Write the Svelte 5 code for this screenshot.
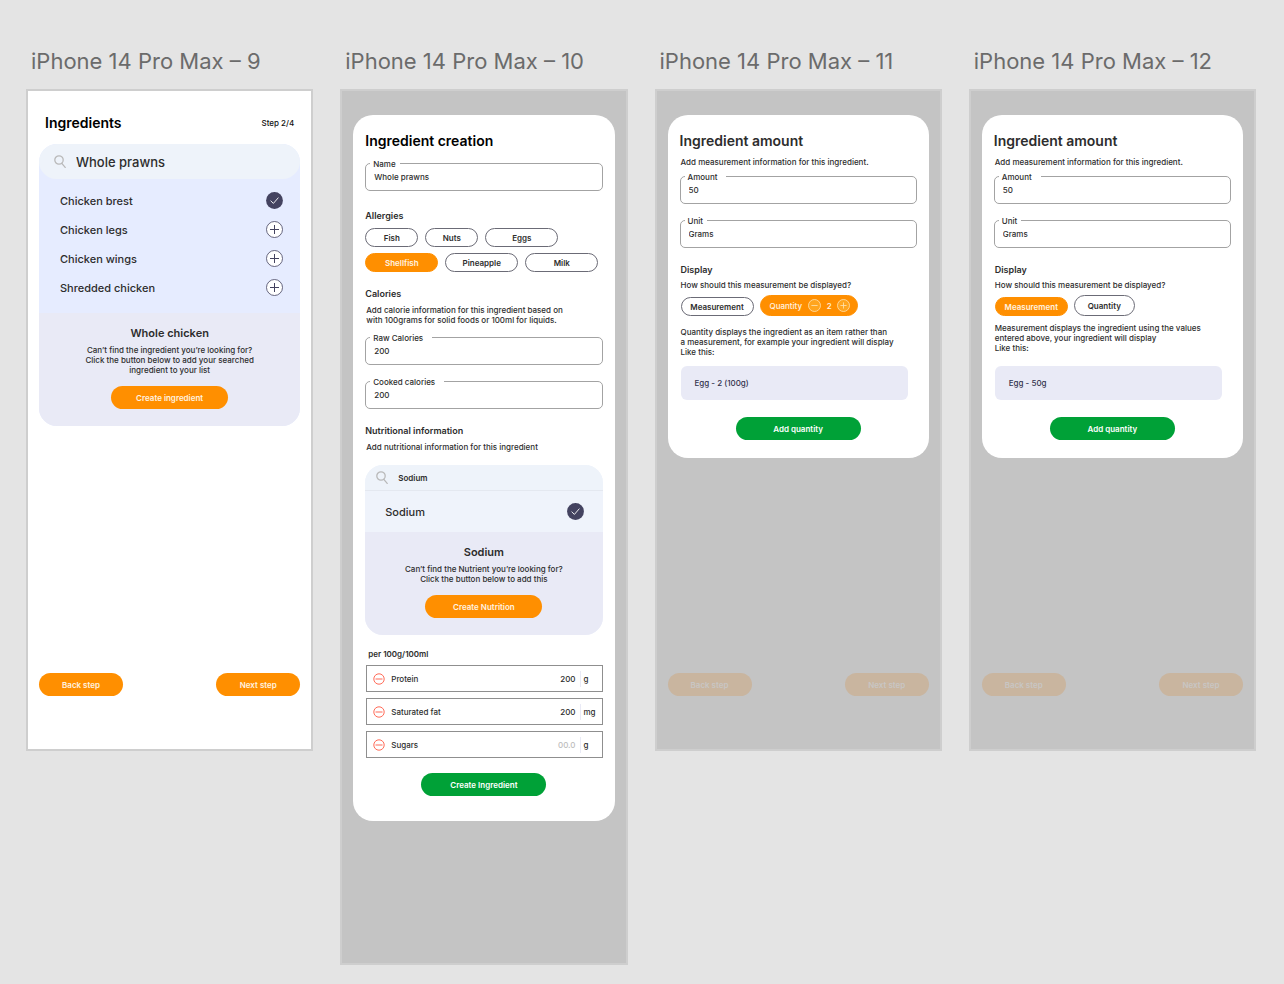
<script lang="ts">
  type Amount = {
    title: string;
    mode: "quantity" | "measurement";
    text: string;
    example: string;
  };

  const ingredients = [
    { name: "Chicken brest", added: true },
    { name: "Chicken legs", added: false },
    { name: "Chicken wings", added: false },
    { name: "Shredded chicken", added: false },
  ];

  const allergies = [
    [
      { name: "Fish", size: "sm" },
      { name: "Nuts", size: "sm" },
      { name: "Eggs", size: "md" },
    ],
    [
      { name: "Shellfish", size: "md", active: true },
      { name: "Pineapple", size: "md" },
      { name: "Milk", size: "md" },
    ],
  ];

  const nutrients = [
    { name: "Protein", value: "200", unit: "g" },
    { name: "Saturated fat", value: "200", unit: "mg" },
    { name: "Sugars", value: "", unit: "g" },
  ];

  const amounts: Amount[] = [
    {
      title: "iPhone 14 Pro Max – 11",
      mode: "quantity",
      text: "Quantity displays the ingredient as an item rather than\na measurement, for example your ingredient will display\nLike this:",
      example: "Egg - 2 (100g)",
    },
    {
      title: "iPhone 14 Pro Max – 12",
      mode: "measurement",
      text: "Measurement displays the ingredient using the values\nentered above, your ingredient will display\nLike this:",
      example: "Egg - 50g",
    },
  ];
</script>

{#snippet searchIcon()}
  <svg class="search-icon" width="12" height="13" viewBox="0 0 12 13" fill="none" stroke="#b9b9b9" stroke-width="1.3" aria-hidden="true">
    <circle cx="5" cy="5" r="4.2" />
    <path d="M7.6 8.2 11.2 12.4" stroke-linecap="round" />
  </svg>
{/snippet}

{#snippet toggle(name: string, added: boolean)}
  <button type="button" class="toggle" aria-label={added ? `Remove ${name}` : `Add ${name}`}>
    <svg width="17" height="17" viewBox="0 0 17 17" fill="none">
      {#if added}
        <circle cx="8.5" cy="8.5" r="8.4" fill="#444360" />
        <path d="M4.6 8.7 7.4 11.4 12.4 5.6" stroke="#fff" stroke-width="0.9" />
      {:else}
        <circle cx="8.5" cy="8.5" r="8" fill="#fff" stroke="#444360" stroke-width="0.8" />
        <path d="M8.5 4v9M4 8.5h9" stroke="#444360" stroke-width="1" />
      {/if}
    </svg>
  </button>
{/snippet}

{#snippet field(id: string, label: string, value: string, tight = false)}
  <div class="field">
    <label class:tight for={id}>{label}</label>
    <input {id} type="text" {value} />
  </div>
{/snippet}

{#snippet steps(dimmed: boolean)}
  <nav class="steps" class:dimmed aria-label="Steps">
    <button class="btn">Back step</button>
    <button class="btn">Next step</button>
  </nav>
{/snippet}

<main class="canvas">
  <section>
    <h2 class="board-title">iPhone 14 Pro Max – 9</h2>
    <div class="board">
      <header class="board-head">
        <h1>Ingredients</h1>
        <span>Step 2/4</span>
      </header>

      <div class="finder">
        <div class="search">
          {@render searchIcon()}
          <input type="text" aria-label="Search ingredients" value="Whole prawns" />
        </div>
        <ul class="results">
          {#each ingredients as item}
            <li>
              <span>{item.name}</span>
              {@render toggle(item.name, item.added)}
            </li>
          {/each}
        </ul>
        <div class="missing">
          <h3>Whole chicken</h3>
          <p>{"Can’t find the ingredient you’re looking for?\nClick the button below to add your searched\ningredient to your list"}</p>
          <button class="btn wide">Create ingredient</button>
        </div>
      </div>

      {@render steps(false)}
    </div>
  </section>

  <section>
    <h2 class="board-title">iPhone 14 Pro Max – 10</h2>
    <div class="board overlay tall">
      <form class="card creation">
        <h1>Ingredient creation</h1>
        {@render field("name", "Name", "Whole prawns", true)}

        <h4 class="first">Allergies</h4>
        <div class="pills">
          {#each allergies as row}
            <div class="pill-row">
              {#each row as item}
                <button type="button" class="pill {item.size}" class:active={item.active}>{item.name}</button>
              {/each}
            </div>
          {/each}
        </div>

        <h4>Calories</h4>
        <p class="note">{"Add calorie information for this ingredient based on\nwith 100grams for solid foods or 100ml for liquids."}</p>
        {@render field("raw", "Raw Calories", "200")}
        {@render field("cooked", "Cooked calories", "200")}

        <h4>Nutritional information</h4>
        <p class="note">Add nutritional information for this ingredient</p>

        <div class="finder compact">
          <div class="search">
            {@render searchIcon()}
            <input type="text" aria-label="Search nutrients" value="Sodium" />
          </div>
          <ul class="results">
            <li>
              <span>Sodium</span>
              {@render toggle("Sodium", true)}
            </li>
          </ul>
          <div class="missing">
            <h3>Sodium</h3>
            <p>{"Can’t find the Nutrient you’re looking for?\nClick the button below to add this"}</p>
            <button type="button" class="btn wide">Create Nutrition</button>
          </div>
        </div>

        <h5>per 100g/100ml</h5>
        <ul class="nutrients">
          {#each nutrients as item, i}
            <li>
              <button type="button" class="remove" aria-label="Remove {item.name}">
                <svg width="12" height="12" viewBox="0 0 12 12" fill="none" stroke="#ff5a45" stroke-width="0.9">
                  <circle cx="6" cy="6" r="5.2" />
                  <path d="M2.5 6h7" />
                </svg>
              </button>
              <label for="nutrient-{i}">{item.name}</label>
              <input id="nutrient-{i}" type="text" placeholder="00.0" value={item.value} />
              <span class="unit">{item.unit}</span>
            </li>
          {/each}
        </ul>

        <button type="button" class="btn submit">Create Ingredient</button>
      </form>
    </div>
  </section>

  {#each amounts as screen}
    <section>
      <h2 class="board-title">{screen.title}</h2>
      <div class="board overlay">
        <form class="card amount {screen.mode}">
          <h1>Ingredient amount</h1>
          <p class="note">Add measurement information for this ingredient.</p>
          {@render field(`amount-${screen.mode}`, "Amount", "50")}
          {@render field(`unit-${screen.mode}`, "Unit", "Grams", true)}

          <div class="display">
            <h4>Display</h4>
            <p>How should this measurement be displayed?</p>
            <div class="pill-row modes">
              <button type="button" class="pill md" class:active={screen.mode === "measurement"}>Measurement</button>
              {#if screen.mode === "quantity"}
                <div class="pill counter active">
                  <span>Quantity</span>
                  <button type="button" aria-label="Less">
                    <svg width="13" height="13" viewBox="0 0 13 13" fill="#ffa51f" stroke="#ffe3b3" stroke-width="0.8">
                      <circle cx="6.5" cy="6.5" r="6" />
                      <path d="M3.4 6.5h6.2" />
                    </svg>
                  </button>
                  <output>2</output>
                  <button type="button" aria-label="More">
                    <svg width="13" height="13" viewBox="0 0 13 13" fill="#ffa51f" stroke="#ffe3b3" stroke-width="0.8">
                      <circle cx="6.5" cy="6.5" r="6" />
                      <path d="M3.4 6.5h6.2M6.5 3.4v6.2" />
                    </svg>
                  </button>
                </div>
              {:else}
                <button type="button" class="pill qty">Quantity</button>
              {/if}
            </div>
            <p class="explain">{screen.text}</p>
            <div class="example">{screen.example}</div>
          </div>

          <button type="button" class="btn submit">Add quantity</button>
        </form>

        {@render steps(true)}
      </div>
    </section>
  {/each}
</main>

<style>
  :global(body) {
    background: #e4e4e4;
  }

  .canvas {
    display: grid;
    grid-template-columns: repeat(4, minmax(0, 1fr));
    align-items: start;
    gap: 27px;
    padding: 47px 28px 19px 26px;
    font-family: Inter, sans-serif;
    font-size: 8px;
    font-weight: 500;
    line-height: 10px;
    color: #2d2d2d;
  }

  .canvas,
  .canvas :global(*) {
    box-sizing: border-box;
  }

  h1, h2, h3, h4, h5, p, ul {
    margin: 0;
    padding: 0;
  }

  ul {
    list-style: none;
  }

  p {
    white-space: pre-line;
  }

  button, input {
    font: inherit;
    color: inherit;
    margin: 0;
    padding: 0;
    border: 0;
    background: none;
  }

  button {
    cursor: pointer;
  }

  input {
    min-width: 0;
    outline: none;
  }

  svg {
    display: block;
  }

  h1 {
    font-size: 14px;
    font-weight: 600;
    line-height: 20px;
    color: #000;
  }

  h4, h5 {
    font-size: 9px;
    font-weight: 600;
    line-height: 12px;
  }

  .board-title {
    padding-left: 5px;
    margin-bottom: 14px;
    font-size: 22px;
    font-weight: 400;
    line-height: 28px;
    color: #6b6b6b;
    white-space: nowrap;
  }

  .board {
    display: flex;
    flex-direction: column;
    min-height: 662px;
    padding: 22px 11px 53px;
    border: 2px solid #cecece;
    background: #fff;
  }

  .board.overlay {
    padding-top: 24px;
    background: #c4c4c4;
  }

  .board.tall {
    min-height: 876px;
  }

  .board-head {
    display: flex;
    align-items: center;
    justify-content: space-between;
    padding: 0 6px;
    margin-bottom: 11px;
    color: #111;
  }

  .btn {
    height: 23px;
    width: 84px;
    border-radius: 12px;
    background: #ff8f00;
    color: #fff3e0;
    font-weight: 600;
  }

  .btn.wide {
    width: 117px;
  }

  .btn.submit {
    display: block;
    width: 125px;
    margin: 0 auto;
    background: #00a137;
    color: #fff;
  }

  .steps {
    display: flex;
    justify-content: space-between;
    margin-top: auto;
  }

  .steps.dimmed .btn {
    background: #c9b59f;
    color: #c8c6c4;
  }

  /* search box with results */
  .finder {
    overflow: hidden;
    border-radius: 18px;
    background: #e6ecff;
  }

  .search {
    display: flex;
    align-items: center;
    gap: 10px;
    height: 35px;
    padding: 0 15px;
    border-radius: 18px;
    background: #eef3fa;
    font-size: 13px;
    line-height: 16px;
  }

  .search input {
    flex: 1;
  }

  .results {
    padding: 7px 17px 11px 21px;
  }

  .results li {
    display: flex;
    align-items: center;
    justify-content: space-between;
    height: 29px;
    font-size: 11px;
  }

  .missing {
    padding: 13px 12px 17px;
    background: #e9eaf6;
    text-align: center;
  }

  .missing h3 {
    font-size: 11px;
    font-weight: 600;
    line-height: 14px;
    margin-bottom: 5px;
  }

  .missing .btn {
    display: block;
    margin: 11px auto 0;
  }

  .compact {
    margin-top: 13px;
    background: #eff3fb;
  }

  .compact .search {
    height: 26px;
    padding: 0 11px;
    border-radius: 0;
    border-bottom: 1px solid #e4e8f0;
    font-size: 8px;
    font-weight: 600;
  }

  .compact .results {
    padding: 6px 19px 6px 20px;
  }

  /* modal card */
  .card {
    padding: 16px 12px 18px;
    border-radius: 20px;
    background: #fff;
  }

  .creation {
    padding-bottom: 25px;
  }

  .amount h1 {
    color: #2d2d2d;
  }

  .card h4 {
    margin-top: 16px;
  }

  .card h4.first {
    margin-top: 19px;
  }

  .note {
    margin-top: 5px;
    padding-left: 1px;
  }

  .amount .note {
    margin-top: 6px;
  }

  .field {
    position: relative;
    margin-top: 16px;
  }

  h1 + .field,
  .note + .field {
    margin-top: 12px;
  }

  .amount .note + .field {
    margin-top: 9px;
  }

  .field label {
    position: absolute;
    top: -4px;
    left: 5px;
    padding: 0 9px 0 3px;
    background: #fff;
  }

  .field label.tight {
    padding-right: 4px;
  }

  .field input {
    display: block;
    width: 100%;
    height: 28px;
    padding: 0 8px;
    border: 1px solid #a3a3a3;
    border-radius: 5px;
  }

  .pills {
    display: grid;
    gap: 6px;
    margin-top: 6px;
  }

  .pill-row {
    display: flex;
    gap: 7px;
  }

  .pill {
    height: 19px;
    border: 1px solid #6b6b76;
    border-radius: 10px;
    font-weight: 600;
  }

  .pill.sm {
    width: 53px;
  }

  .pill.md {
    width: 73px;
  }

  .pill.active {
    border-color: #ff8f00;
    background: #ff8f00;
    color: #fff3e0;
  }

  h5 {
    margin: 13px 0 5px;
    padding-left: 3px;
  }

  .card h5 {
    font-size: 8px;
  }

  .nutrients {
    display: grid;
    gap: 6px;
    padding-left: 1px;
    margin-bottom: 15px;
  }

  .nutrients li {
    display: flex;
    align-items: center;
    height: 27px;
    padding-left: 6px;
    border: 1px solid #8f8f8f;
  }

  .nutrients label {
    margin-left: 6px;
  }

  .nutrients input {
    flex: 1;
    text-align: right;
    padding-right: 4px;
  }

  .nutrients input::placeholder {
    color: #bdbdbd;
    opacity: 1;
  }

  .unit {
    width: 22px;
    padding-left: 3px;
    border-left: 1px solid #e9eaf6;
    line-height: 16px;
  }

  .display {
    padding: 0 8px 0 1px;
    margin-bottom: 17px;
  }

  .display p {
    margin-top: 4px;
  }

  .modes {
    align-items: flex-end;
    gap: 6px;
    margin-top: 5px;
  }

  .pill.qty {
    width: 61px;
    height: 21px;
    border-radius: 11px;
  }

  .pill.counter {
    display: flex;
    align-items: center;
    justify-content: space-between;
    width: 98px;
    height: 21px;
    padding: 0 6px 0 9px;
    border-radius: 11px;
    font-weight: 500;
  }

  .display .explain {
    margin-top: 11px;
  }

  .display .example {
    margin-top: 9px;
    margin-right: 12px;
  }

  .measurement .explain {
    margin-top: 7px;
  }

  .measurement .example {
    margin-top: 13px;
  }

  .display .example {
    margin-right: 1px;
    padding: 12px 14px;
    border-radius: 6px;
    background: #e9eaf6;
    color: #33334d;
  }
</style>
